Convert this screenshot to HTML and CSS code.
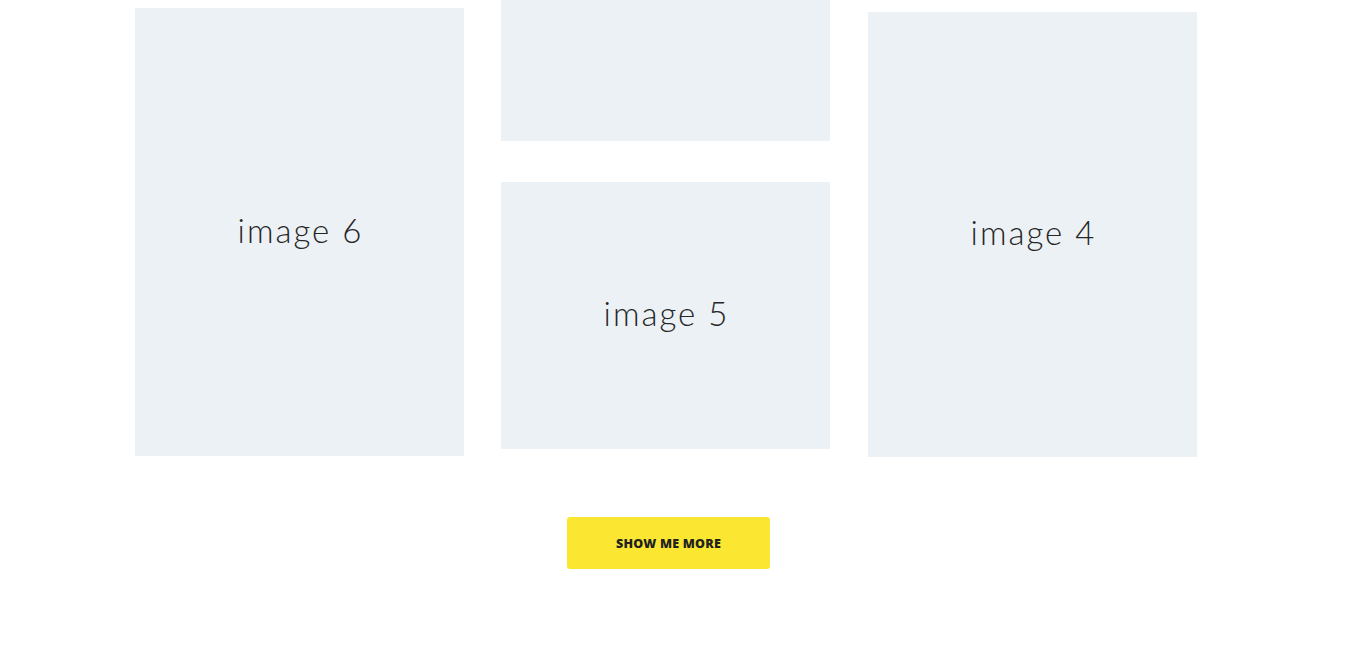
FILE: index.html
```html
<!DOCTYPE html>
<html>
<head>
<meta charset="utf-8">
<link rel="stylesheet" href="styles.css">
</head>
<body>
<section class="gallery">
  <div class="grid">
    <div class="col col-1">
      <div class="tile tile-6"><span>image 6</span></div>
    </div>
    <div class="col col-2">
      <div class="tile tile-top"></div>
      <div class="tile tile-5"><span>image 5</span></div>
    </div>
    <div class="col col-3">
      <div class="tile tile-4"><span>image 4</span></div>
    </div>
  </div>
  <div class="actions">
    <button class="more">SHOW ME MORE</button>
  </div>
</section>
</body>
</html>
```
FILE: styles.css
```css
* { box-sizing: border-box; }
html, body { margin: 0; padding: 0; background: #fff; }
body { font-family: "Lato", "Noto Sans", sans-serif; overflow: hidden; }
.gallery { width: 1062px; margin-left: 135px; }
.grid { display: flex; gap: 37px; align-items: flex-start; }
.col { width: 329px; display: flex; flex-direction: column; gap: 41px; }
.col-1 { margin-top: 8px; }
.col-3 { margin-top: 12px; margin-left: 1px; }
.tile {
  background: #ecf1f5;
  display: flex;
  align-items: center;
  justify-content: center;
  color: #262626;
  font-size: 33px;
  font-weight: 300;
  letter-spacing: 2px;
}
.tile span { margin-top: -5px; margin-right: -2px; }
.tile-6 { height: 448px; }
.tile-top { height: 141px; }
.tile-5 { height: 267px; }
.tile-4 { height: 445px; }
.actions { display: flex; justify-content: center; padding-top: 60px; padding-left: 5px; }
.more {
  width: 203px;
  height: 52px;
  border: none;
  border-radius: 3px;
  background: #fbe731;
  color: #222;
  font-family: "Open Sans", sans-serif;
  font-weight: 800;
  font-size: 12.5px;
  letter-spacing: 0.2px;
  cursor: pointer;
}
```
